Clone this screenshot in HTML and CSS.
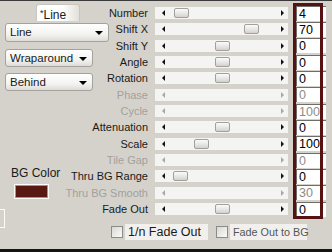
FILE: index.html
```html
<!DOCTYPE html>
<html>
<head>
    <title>Line Settings</title>
    <link rel="stylesheet" href="styles.css">
</head>
<body>
    <div class="app">
        <div class="side">
            <div class="preset"><span class="star">*</span>Line</div>
            <div class="combo wide">Line<span class="drop"></span></div>
            <div class="combo">Wraparound<span class="drop"></span></div>
            <div class="combo">Behind<span class="drop"></span></div>
            <div class="bg-label">BG Color</div>
            <div class="swatch"></div>
            <div class="bracket"></div>
        </div>
        <div class="main">
            <div class="rows">
                <div class="label">Number</div>
                <div class="track"><span class="arrow-l"></span><span class="thumb" style="left:19px"></span><span class="arrow-r"></span></div>
                <div class="value">4</div>

                <div class="label">Shift X</div>
                <div class="track"><span class="arrow-l"></span><span class="thumb" style="left:89px"></span><span class="arrow-r"></span></div>
                <div class="value">70</div>

                <div class="label">Shift Y</div>
                <div class="track"><span class="arrow-l"></span><span class="thumb" style="left:60px"></span><span class="arrow-r"></span></div>
                <div class="value">0</div>

                <div class="label">Angle</div>
                <div class="track"><span class="arrow-l"></span><span class="thumb" style="left:60px"></span><span class="arrow-r"></span></div>
                <div class="value">0</div>

                <div class="label">Rotation</div>
                <div class="track"><span class="arrow-l"></span><span class="thumb" style="left:60px"></span><span class="arrow-r"></span></div>
                <div class="value">0</div>

                <div class="label off">Phase</div>
                <div class="track off"><span class="arrow-l"></span><span class="arrow-r"></span></div>
                <div class="value off">0</div>

                <div class="label off">Cycle</div>
                <div class="track off"><span class="arrow-l"></span><span class="arrow-r"></span></div>
                <div class="value off">100</div>

                <div class="label">Attenuation</div>
                <div class="track"><span class="arrow-l"></span><span class="thumb" style="left:60px"></span><span class="arrow-r"></span></div>
                <div class="value">0</div>

                <div class="label">Scale</div>
                <div class="track"><span class="arrow-l"></span><span class="thumb" style="left:39px"></span><span class="arrow-r"></span></div>
                <div class="value">100</div>

                <div class="label off">Tile Gap</div>
                <div class="track off"><span class="arrow-l"></span><span class="arrow-r"></span></div>
                <div class="value off">0</div>

                <div class="label">Thru BG Range</div>
                <div class="track"><span class="arrow-l"></span><span class="thumb" style="left:18px"></span><span class="arrow-r"></span></div>
                <div class="value">0</div>

                <div class="label off">Thru BG Smooth</div>
                <div class="track off"><span class="arrow-l"></span><span class="arrow-r"></span></div>
                <div class="value off">30</div>

                <div class="label">Fade Out</div>
                <div class="track"><span class="arrow-l"></span><span class="thumb" style="left:60px"></span><span class="arrow-r"></span></div>
                <div class="value">0</div>

                <div class="frame"></div>
            </div>
            <div class="checks">
                <span class="check"></span><span class="check-text first">1/n Fade Out</span>
                <span class="check"></span><span class="check-text second">Fade Out to BG</span>
            </div>
        </div>
    </div>
</body>
</html>
```

FILE: styles.css
```css
body {
    margin: 0;
    font-family: "Liberation Sans", Arial, sans-serif;
    font-size: 11px;
    color: #1a1a1a;
    background-color: #d5d2cc;
}
.app {
    display: flex;
    width: 332px;
    height: 252px;
    box-sizing: border-box;
    border-top: 1px solid #3a3a3a;
    border-bottom: 3px solid #141414;
    overflow: hidden;
}
.side {
    width: 110px;
    display: flex;
    flex-direction: column;
    align-items: flex-start;
}
.preset {
    margin: 3px 0 0 36px;
    width: 44px;
    height: 17px;
    box-sizing: border-box;
    padding: 1px 0 0 3px;
    font-size: 12px;
    line-height: 15px;
    border: 1px solid #c9c6bf;
    border-bottom: none;
    border-radius: 3px 3px 0 0;
    background: linear-gradient(to right, #ffffff 60%, #e2e0da);
}
.star {
    font-size: 9px;
    vertical-align: 3px;
}
.combo {
    position: relative;
    margin: 7px 0 0 5px;
    width: 88px;
    height: 18px;
    box-sizing: border-box;
    padding-left: 4px;
    font-size: 11.5px;
    line-height: 16px;
    border: 1px solid #a4a29c;
    border-radius: 3px;
    background: linear-gradient(#ffffff, #f3f3f1 60%, #dedcd7);
}
.combo.wide {
    margin-top: 2px;
    width: 104px;
    height: 19px;
    line-height: 17px;
}
.combo:nth-child(4) {
    margin-top: 6px;
}
.drop {
    position: absolute;
    right: 5px;
    top: 7px;
    border-left: 4px solid transparent;
    border-right: 4px solid transparent;
    border-top: 4px solid #000;
}
.bg-label {
    margin: 75px 0 0 11px;
    font-size: 12px;
    line-height: 14px;
}
.swatch {
    margin: 4px 0 0 14px;
    width: 35px;
    height: 15px;
    box-sizing: border-box;
    border: 1px solid #fbfbfb;
    outline: 1px solid #9b9892;
    outline-offset: -2px;
    background-color: #571911;
}
.bracket {
    margin-top: 10px;
    width: 5px;
    height: 19px;
    box-sizing: border-box;
    border: 1px solid #fcfcfc;
    border-left: none;
}
.main {
    flex: 1;
}
.rows {
    position: relative;
    margin-top: 4px;
    display: grid;
    grid-template-columns: 38px 133px 31px;
    grid-auto-rows: 16.33px;
    column-gap: 7px;
}
.label {
    display: flex;
    justify-content: flex-end;
    align-items: center;
    white-space: nowrap;
}
.label.off {
    color: #a3a19c;
}
.track {
    position: relative;
    align-self: center;
    height: 12px;
    background-color: #f4f4f2;
}
.arrow-l {
    position: absolute;
    left: 7px;
    top: 3px;
    border-top: 3px solid transparent;
    border-bottom: 3px solid transparent;
    border-right: 3px solid #111;
}
.arrow-r {
    position: absolute;
    right: 4px;
    top: 3px;
    border-top: 3px solid transparent;
    border-bottom: 3px solid transparent;
    border-left: 3px solid #111;
}
.track.off .arrow-l {
    border-right-color: #a8a8a8;
}
.track.off .arrow-r {
    border-left-color: #a8a8a8;
}
.thumb {
    position: absolute;
    top: 1px;
    width: 15px;
    height: 10px;
    box-sizing: border-box;
    border: 1px solid #a2a09b;
    border-radius: 2px;
    background: linear-gradient(#fbfbfb, #e4e4e2 60%, #d2d1cd);
}
.value {
    margin-left: 1px;
    align-self: center;
    height: 15px;
    box-sizing: border-box;
    padding-left: 2px;
    font-size: 12.5px;
    line-height: 14px;
    color: #000;
    border-top: 1px solid #6f6d68;
    border-left: 1px solid #6f6d68;
    background-color: #ffffff;
}
.value.off {
    color: #8e8c88;
}
.frame {
    position: absolute;
    left: 183px;
    top: -2px;
    width: 30px;
    height: 216px;
    box-sizing: border-box;
    border: 3px solid #561212;
}
.checks {
    display: flex;
    align-items: center;
    margin-top: 7px;
    height: 16px;
}
.check {
    width: 12px;
    height: 12px;
    box-sizing: border-box;
    border: 1px solid #8d8b86;
    background: linear-gradient(135deg, #d8d7d3, #fbfbfb);
    margin-left: 1px;
}
.check-text {
    margin-left: 2px;
    padding-left: 3px;
    height: 16px;
    box-sizing: border-box;
    white-space: nowrap;
    font-size: 12.5px;
    line-height: 16px;
    background-color: #f1f0ed;
}
.check-text.first {
    width: 83px;
    margin-right: 7px;
}
.check-text.second {
    width: 77px;
    font-size: 10.8px;
    color: #555;
}
```
